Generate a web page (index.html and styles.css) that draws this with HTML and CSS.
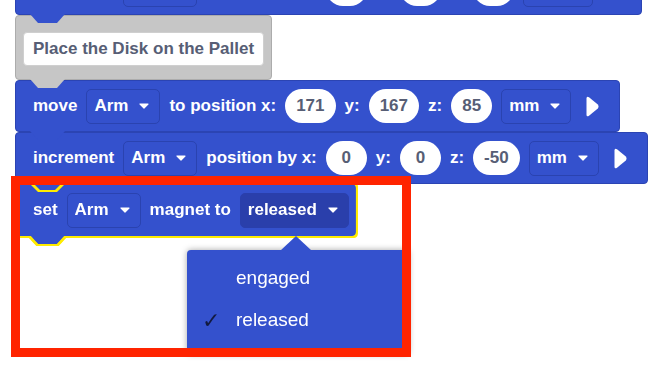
FILE: index.html
```html
<!DOCTYPE html>
<html lang="en">
<head>
  <meta charset="UTF-8">
  <meta name="viewport" content="width=device-width, initial-scale=1.0">
  <title>Arm Blocks</title>
  <link rel="stylesheet" href="styles.css">
</head>
<body>
  <div id="workspace">
    <div class="stack">
      <div class="block">
        <span>increment</span>
        <span class="dropdown">Arm <svg class="caret" viewBox="0 0 10 6"><path d="M1 1h8L5 5z"/></svg></span>
        <span>position by x:</span>
        <span class="value">0</span>
        <span>y:</span>
        <span class="value">0</span>
        <span>z:</span>
        <span class="value">0</span>
        <span class="dropdown">mm <svg class="caret" viewBox="0 0 10 6"><path d="M1 1h8L5 5z"/></svg></span>
        <svg class="run" viewBox="0 0 13 21"><path d="M3 1.2L11.8 8.6Q13.2 10.5 11.8 12.4L3 19.8Q0.5 21.4 0.5 18.5V2.5Q0.5 -0.4 3 1.2Z"/></svg>
      </div>

      <div class="comment">
        <div class="comment-field">Place the Disk on the Pallet</div>
      </div>

      <div class="block">
        <span>move</span>
        <span class="dropdown">Arm <svg class="caret" viewBox="0 0 10 6"><path d="M1 1h8L5 5z"/></svg></span>
        <span>to position x:</span>
        <span class="value">171</span>
        <span>y:</span>
        <span class="value">167</span>
        <span>z:</span>
        <span class="value">85</span>
        <span class="dropdown">mm <svg class="caret" viewBox="0 0 10 6"><path d="M1 1h8L5 5z"/></svg></span>
        <svg class="run" viewBox="0 0 13 21"><path d="M3 1.2L11.8 8.6Q13.2 10.5 11.8 12.4L3 19.8Q0.5 21.4 0.5 18.5V2.5Q0.5 -0.4 3 1.2Z"/></svg>
      </div>

      <div class="block">
        <span>increment</span>
        <span class="dropdown">Arm <svg class="caret" viewBox="0 0 10 6"><path d="M1 1h8L5 5z"/></svg></span>
        <span>position by x:</span>
        <span class="value">0</span>
        <span>y:</span>
        <span class="value">0</span>
        <span>z:</span>
        <span class="value">-50</span>
        <span class="dropdown">mm <svg class="caret" viewBox="0 0 10 6"><path d="M1 1h8L5 5z"/></svg></span>
        <svg class="run" viewBox="0 0 13 21"><path d="M3 1.2L11.8 8.6Q13.2 10.5 11.8 12.4L3 19.8Q0.5 21.4 0.5 18.5V2.5Q0.5 -0.4 3 1.2Z"/></svg>
      </div>

      <div class="selected-wrap">
        <div class="block selected">
          <span>set</span>
          <span class="dropdown">Arm <svg class="caret" viewBox="0 0 10 6"><path d="M1 1h8L5 5z"/></svg></span>
          <span>magnet to</span>
          <span class="dropdown open">released <svg class="caret" viewBox="0 0 10 6"><path d="M1 1h8L5 5z"/></svg></span>
        </div>
      </div>
    </div>

    <div class="menu">
      <div class="menu-item"><span class="check"></span>engaged</div>
      <div class="menu-item"><span class="check">✓</span>released</div>
    </div>

    <div class="highlight"></div>
  </div>
</body>
</html>
```

FILE: styles.css
```css
* {
  box-sizing: border-box;
}
body {
  margin: 0;
  background-color: #fff;
  font-family: "Liberation Sans", Arial, Helvetica, sans-serif;
  overflow: hidden;
}
#workspace {
  position: relative;
  width: 663px;
  height: 388px;
  overflow: hidden;
}
.stack {
  display: flex;
  flex-direction: column;
  align-items: flex-start;
  padding-left: 15px;
  margin-top: -37px;
}
.block {
  position: relative;
  display: flex;
  align-items: center;
  gap: 9px;
  height: 52px;
  padding: 0 20px 0 17px;
  background-color: #3451cd;
  border: 1px solid #2b44b3;
  border-radius: 4px;
  color: #fff;
  font-size: 17px;
  font-weight: bold;
  white-space: nowrap;
}
.block::after {
  content: "";
  position: absolute;
  left: 14px;
  top: 100%;
  width: 35px;
  height: 9px;
  background-color: #3451cd;
  clip-path: polygon(0 0, 35px 0, 27px 9px, 8px 9px);
  z-index: 2;
}
.dropdown {
  display: flex;
  align-items: center;
  gap: 11px;
  height: 35px;
  padding: 0 10px 0 7px;
  border: 1px solid #2a43b0;
  border-radius: 5px;
}
.dropdown.open {
  background-color: #2a3fab;
  border-color: #2a3fab;
}
.caret {
  width: 10px;
  height: 6px;
  fill: #fff;
  stroke: #fff;
  stroke-width: 1.2;
  stroke-linejoin: round;
}
.value {
  display: flex;
  align-items: center;
  justify-content: center;
  min-width: 41px;
  height: 34px;
  padding: 0 11px;
  border-radius: 17px;
  background-color: #fff;
  color: #575e75;
}
.run {
  width: 13px;
  height: 21px;
  margin-left: 6px;
  fill: #fff;
}

.comment {
  position: relative;
  height: 65px;
  padding: 16px 7px 0 7px;
  background-color: #c6c6c6;
  border: 1px solid #acacac;
  border-radius: 4px;
}
.comment::after {
  content: "";
  position: absolute;
  left: 14px;
  top: 100%;
  width: 35px;
  height: 9px;
  background-color: #c6c6c6;
  clip-path: polygon(0 0, 35px 0, 27px 9px, 8px 9px);
  z-index: 2;
}
.comment-field {
  display: flex;
  align-items: center;
  height: 34px;
  padding: 0 9px;
  background-color: #fff;
  border: 1px solid #cfcfcf;
  border-radius: 4px;
  color: #575e75;
  font-size: 17px;
  font-weight: bold;
  white-space: nowrap;
}

.selected-wrap {
  position: relative;
  z-index: 3;
  filter: drop-shadow(2px 0 0 #ffec00) drop-shadow(-2px 0 0 #ffec00) drop-shadow(0 2px 0 #ffec00) drop-shadow(0 -2px 0 #ffec00);
}
.block.selected {
  padding-right: 6px;
  border-color: #3451cd;
  clip-path: polygon(0 0, 15px 0, 23px 8px, 42px 8px, 50px 0, 100% 0, 100% 100%, 50px 100%, 42px calc(100% + 8px), 23px calc(100% + 8px), 15px 100%, 0 100%);
}

.menu {
  position: absolute;
  left: 187px;
  top: 250px;
  width: 222px;
  height: 104px;
  padding-top: 7px;
  background-color: #3451cd;
  border-radius: 4px;
  box-shadow: 0 0 6px rgba(0, 0, 0, 0.35);
  z-index: 4;
}
.menu::before {
  content: "";
  position: absolute;
  left: 93px;
  top: -14px;
  width: 32px;
  height: 15px;
  background-color: #3451cd;
  clip-path: polygon(50% 0, 100% 100%, 0 100%);
}
.menu-item {
  display: flex;
  align-items: center;
  height: 42px;
  padding-left: 15px;
  color: #fff;
  font-size: 19px;
}
.check {
  width: 34px;
  color: #121a40;
  font-family: "DejaVu Sans", sans-serif;
  font-size: 22px;
  font-weight: bold;
  font-style: italic;
}

.highlight {
  position: absolute;
  left: 11px;
  top: 176px;
  width: 400px;
  height: 181px;
  border: 9px solid #ff2400;
  z-index: 5;
}
```
